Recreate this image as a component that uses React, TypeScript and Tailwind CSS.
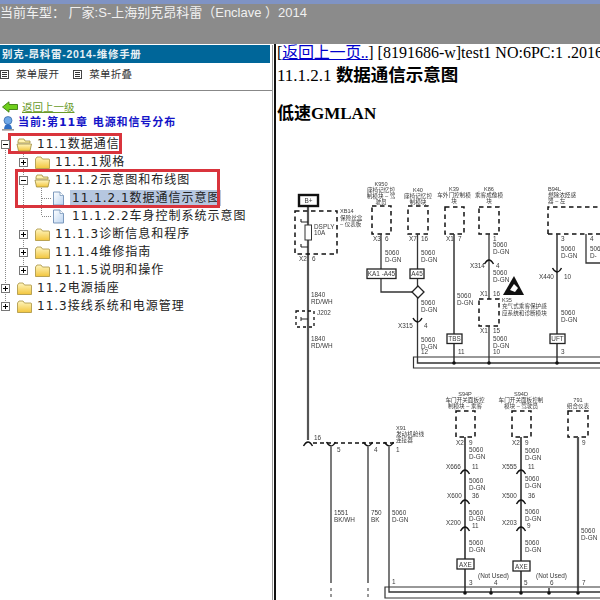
import React from "react";

const cjk = '"DejaVu Sans","Noto Sans CJK SC",sans-serif';

function Folder({ open }: { open?: boolean }) {
  return (
    <svg width="17" height="15" viewBox="0 0 17 15" className="relative z-10 shrink-0">
      <defs>
        <linearGradient id="fg" x1="0" y1="0" x2="0" y2="1">
          <stop offset="0" stopColor="#fff6c0" />
          <stop offset="1" stopColor="#f2c53c" />
        </linearGradient>
      </defs>
      {open ? (
        <>
          <path d="M2 4 L3 2 H8 L9 4 H14 V6 H2 Z" fill="#fff3b0" stroke="#9c8a3a" strokeWidth="0.8" />
          <path d="M1 7 H15.5 L14 14 H2.5 Z" fill="url(#fg)" stroke="#9c8a3a" strokeWidth="0.8" />
        </>
      ) : (
        <path d="M1.5 4 L3 2 H7 L8.5 4 H15 Q15.5 4 15.5 5 V13.5 H1.5 Z" fill="url(#fg)" stroke="#a8923f" strokeWidth="0.8" />
      )}
    </svg>
  );
}

function FileIcon() {
  return (
    <svg width="13" height="15" viewBox="0 0 13 15" className="shrink-0">
      <defs>
        <linearGradient id="pg" x1="0" y1="0" x2="1" y2="1">
          <stop offset="0" stopColor="#ffffff" />
          <stop offset="1" stopColor="#bcd4f0" />
        </linearGradient>
      </defs>
      <path d="M1.5 1 H8 L11.5 4.5 V14 H1.5 Z" fill="url(#pg)" stroke="#6f8fb5" strokeWidth="0.9" />
      <path d="M8 1 V4.5 H11.5" fill="#fff" stroke="#6f8fb5" strokeWidth="0.7" />
    </svg>
  );
}

function Toggle({ open }: { open?: boolean }) {
  return (
    <span className="relative z-10 flex h-[9px] w-[9px] items-center justify-center border border-[#777] bg-white">
      <span className="absolute h-px w-[5px] bg-black" />
      {!open && <span className="absolute h-[5px] w-px bg-black" />}
    </span>
  );
}

function Row({
  indent,
  open,
  label,
}: {
  indent?: boolean;
  open?: boolean;
  label: string;
}) {
  return (
    <div className={`flex h-[18px] items-center whitespace-nowrap ${indent ? "pl-[18px]" : ""}`}>
      <span className="flex h-[18px] w-[16px] shrink-0 items-center pl-[1px]">
        <Toggle open={open} />
      </span>
      <Folder open={open} />
      <span className="ml-[4px] text-[12px] leading-[18px] tracking-[1px] text-[#222]" style={{ fontFamily: cjk }}>
        {label}
      </span>
    </div>
  );
}

function FileRow({ label, selected }: { label: string; selected?: boolean }) {
  return (
    <div className="flex h-[18px] items-center whitespace-nowrap pl-[42px]">
      <span className="mr-[1px] h-0 w-[9px] border-t border-dotted border-[#888]" />
      <FileIcon />
      <span
        className={`ml-[5px] pl-[2px] text-[12px] leading-[16px] tracking-[1px] text-[#222] ${selected ? "bg-[#b6c7e0]" : ""}`}
        style={{ fontFamily: cjk }}
      >
        {label}
      </span>
    </div>
  );
}

function MenuGlyph() {
  return (
    <span className="flex h-[9px] w-[9px] flex-col justify-center gap-[1px] border border-[#444] px-[1px]">
      <span className="h-px bg-[#333]" />
      <span className="h-px bg-[#333]" />
      <span className="h-px bg-[#333]" />
    </span>
  );
}

const fontSvg = "Liberation Sans, Noto Sans CJK SC, sans-serif";

function T({ x, y, s, c, z }: { x: number; y: number; s: string; c?: boolean; z?: boolean }) {
  return (
    <text x={x} y={y} fontSize={z ? 5.6 : 6.4} fill="#3a3a3a" fontFamily={fontSvg} textAnchor={c ? "middle" : "start"}>
      {s}
    </text>
  );
}

function Two({ x, y, a = "5060", b = "D-GN", gap = 6.5 }: { x: number; y: number; a?: string; b?: string; gap?: number }) {
  return (
    <>
      <T x={x} y={y} s={a} />
      <T x={x} y={y + gap} s={b} />
    </>
  );
}

function Dash({ x, y, w, h }: { x: number; y: number; w: number; h: number }) {
  return <rect x={x} y={y} width={w} height={h} fill="none" stroke="#111" strokeWidth="1.5" strokeDasharray="4.5 3.5" />;
}

function Arc({ x, y }: { x: number; y: number }) {
  return <path d={`M${x - 4.5} ${y + 3} Q${x} ${y - 5} ${x + 4.5} ${y + 3}`} fill="none" stroke="#111" strokeWidth="1.4" />;
}

function Cup({ x, y }: { x: number; y: number }) {
  return <path d={`M${x - 4.5} ${y - 2} Q${x} ${y + 6} ${x + 4.5} ${y - 2}`} fill="none" stroke="#111" strokeWidth="1.4" />;
}

function Tag({ x, y, w, h, s }: { x: number; y: number; w: number; h: number; s: string }) {
  return (
    <>
      <rect x={x} y={y} width={w} height={h} fill="#fff" stroke="#222" strokeWidth="1.3" />
      <T x={x + w / 2} y={y + h - 2.4} s={s} c />
    </>
  );
}

function V({ x, a, b, w = 1.3, c = "#333" }: { x: number; a: number; b: number; w?: number; c?: string }) {
  return <line x1={x} y1={a} x2={x} y2={b} stroke={c} strokeWidth={w} />;
}

function Diagram() {
  return (
    <svg viewBox="276 180 324 420" width="324" height="420" className="blur-[0.35px]">
      {/* main supply */}
      <V x={308} a={206} b={440} w={2.2} c="#555" />
      <Dash x={295} y={211} w={42} h={43} />
      <rect x={299} y={195} width={19} height={11} fill="#fff" stroke="#111" strokeWidth="2.4" />
      <T x={308.5} y={203} s="B+" c />
      <rect x={305} y={225} width={6.5} height={15} fill="#fff" stroke="#333" />
      <path d="M301 222 H308 M301 219 V222 M301 247 H308 M301 244 V247" stroke="#222" strokeWidth="1.1" />
      <T x={314} y={229} s="DSPLY" />
      <T x={314} y={235} s="10A" />
      <T x={340} y={213} s="XB14" z />
      <T x={340} y={220} s="保险丝盒" z />
      <T x={340} y={226} s="– 仪表板" z />
      <T x={299} y={261} s="X2" />
      <T x={312} y={261} s="6" />
      <Two x={311} y={297} a="1840" b="RD/WH" />
      <rect x={296} y={311} width={18} height={16} fill="none" stroke="#111" strokeWidth="1.3" strokeDasharray="3 3" />
      <path d="M301 319 H308 M301 317 V321" stroke="#222" />
      <T x={317} y={315} s="J202" />
      <Two x={311} y={341} a="1840" b="RD/WH" />

      {/* K950 */}
      <T x={381} y={186} s="K950" c z />
      <T x={381} y={192} s="座椅记忆控" c z />
      <T x={381} y={198} s="制模块 – 驾" c z />
      <T x={381} y={204} s="驶员" c z />
      <Dash x={372} y={206} w={19} h={28} />
      <T x={373} y={241} s="X3" />
      <T x={385} y={241} s="6" />
      <path d="M381 234 V292 H412" fill="none" stroke="#333" strokeWidth="1.3" />
      <Two x={385} y={255} />
      <Tag x={367} y={269} w={29} h={9.5} s="KA1 -A45" />

      {/* K40 */}
      <T x={418} y={192} s="K40" c z />
      <T x={418} y={198} s="座椅记忆控" c z />
      <T x={418} y={204} s="制模块" c z />
      <Dash x={408} y={206} w={20} h={28} />
      <T x={409} y={241} s="X7" />
      <T x={421} y={241} s="16" />
      <V x={417.5} a={234} b={360} />
      <Two x={421} y={255} />
      <Tag x={410} y={269} w={14} h={9.5} s="A45" />
      <path d="M418 286 L424 292 L418 298 L412 292 Z" fill="#fff" stroke="#222" strokeWidth="1.3" />
      <Two x={421} y={305} />
      <Cup x={417.5} y={320} />
      <T x={398} y={328} s="X315" />
      <T x={424} y={328} s="4" />
      <Two x={421} y={342} />
      <T x={421} y={354} s="12" />

      {/* K39 */}
      <T x={454} y={191} s="K39" c z />
      <T x={454} y={197} s="车外门控制模" c z />
      <T x={454} y={203} s="块" c z />
      <Dash x={445} y={207} w={19} h={27} />
      <T x={446} y={241} s="X1" />
      <T x={458} y={241} s="7" />
      <V x={454} a={234} b={363} w={1.5} />
      <Two x={457} y={298} />
      <Tag x={447} y={334} w={15} h={9.5} s="TBS" />
      <T x={458} y={354} s="11" />

      {/* K86 */}
      <T x={489} y={191} s="K86" c z />
      <T x={489} y={197} s="乘客成像模" c z />
      <T x={489} y={203} s="块" c z />
      <Dash x={479} y={207} w={20} h={27} />
      <T x={493} y={241} s="1" />
      <V x={489} a={234} b={299} />
      <Two x={493} y={247} />
      <Arc x={489} y={261} />
      <T x={470} y={268} s="X314" />
      <T x={496} y={268} s="4" />
      <Two x={493} y={275} />
      <path d="M514 276 L524 295 H503 Z" fill="#111" />
      <path d="M510 290 L514 284 L518 288 L515 292 Z" fill="#fff" />
      <T x={480} y={296} s="X1" />
      <T x={493} y={296} s="16" />
      <Dash x={479} y={299} w={20} h={27} />
      <T x={502} y={302} s="K35" z />
      <T x={502} y={308} s="充气式乘客保护感" z />
      <T x={502} y={315} s="应系统和诊断模块" z />
      <T x={480} y={333} s="X1" />
      <T x={493} y={333} s="15" />
      <V x={489} a={326} b={363} />
      <Two x={493} y={341} />
      <T x={493} y={354} s="10" />

      {/* B94L */}
      <T x={548} y={191} s="B94L" z />
      <T x={548} y={197} s="燃除浓烃感" z />
      <T x={548} y={203} s="器 – 左" z />
      <path d="M548 234 V207 H608 M548 234 H608" fill="none" stroke="#111" strokeWidth="1.5" strokeDasharray="4.5 3.5" />
      <T x={561} y={241} s="3" />
      <T x={590} y={241} s="4" />
      <V x={557} a={234} b={363} w={1.5} />
      <Two x={561} y={251} />
      <path d="M586 234 V263 H606" fill="none" stroke="#333" strokeWidth="1.3" />
      <text x={590} y={251} fontSize={6.4} fill="#3a3a3a" fontFamily={fontSvg}>506</text>
      <text x={590} y={257.5} fontSize={6.4} fill="#3a3a3a" fontFamily={fontSvg}>D-</text>
      <Cup x={557} y={270} />
      <T x={539} y={279} s="X440" />
      <T x={564} y={279} s="10" />
      <Two x={561} y={315} />
      <Tag x={550} y={334} w={15} h={9.5} s="UFT" />
      <T x={561} y={354} s="3" />

      {/* upper bus */}
      <path d="M606 357 H413.5 V368 H606" fill="none" stroke="#333" strokeWidth="1.2" />
      <path d="M417.5 360 V363 H606" fill="none" stroke="#333" strokeWidth="1.4" />
      <circle cx={454} cy={363} r={1.8} fill="#111" />
      <circle cx={489} cy={363} r={1.8} fill="#111" />
      <circle cx={557} cy={363} r={1.8} fill="#111" />

      {/* connector X91 */}
      <Arc x={308} y={443} />
      <line x1={313} y1={443} x2={394} y2={443} stroke="#111" strokeWidth="1.4" strokeDasharray="4 3" />
      <Cup x={331} y={444} />
      <Cup x={368} y={444} />
      <Cup x={389} y={444} />
      <T x={314} y={440} s="16" />
      <T x={337} y={452} s="5" />
      <T x={374} y={452} s="4" />
      <T x={396} y={452} s="1" />
      <T x={396} y={430} s="X91" z />
      <T x={396} y={436} s="发动机舱线" z />
      <T x={396} y={442} s="连接器" z />
      <V x={331} a={447} b={583} />
      <V x={368} a={447} b={583} />
      <path d="M389 447 V592 H606" fill="none" stroke="#333" strokeWidth="1.3" />
      <Two x={334} y={515} a="1551" b="BK/WH" />
      <Two x={371} y={515} a="750" b="BK" />
      <Two x={392} y={515} />
      <T x={392} y={584} s="1" />
      <path d="M331 588 V598 M368 588 V598" stroke="#333" strokeDasharray="3 3" />

      {/* S94P */}
      <T x={465} y={396} s="S94P" c z />
      <T x={465} y={402} s="车门开关面板控" c z />
      <T x={465} y={408} s="制模块 – 乘客" c z />
      <Dash x={456} y={411} w={19} h={26} />
      <T x={456} y={445} s="X2" />
      <T x={469} y={445} s="9" />
      <V x={465} a={437} b={593} w={1.5} c="#222" />
      <Two x={469} y={452} />
      <Arc x={465} y={471} />
      <T x={446} y={469} s="X666" />
      <T x={472} y={469} s="11" />
      <Two x={469} y={483} />
      <Arc x={465} y={501} />
      <T x={447} y={498} s="X600" />
      <T x={472} y={498} s="36" />
      <Two x={469} y={514.5} />
      <Arc x={465} y={528} />
      <T x={446} y={525} s="X200" />
      <T x={472} y={528} s="11" />
      <Two x={469} y={545} />
      <Tag x={457} y={559} w={17} h={10} s="AXE" />
      <T x={469} y={585} s="3" />
      <T x={478} y={578} s="(Not Used)" />
      <T x={494} y={585} s="4" />

      {/* S94D */}
      <T x={521} y={396} s="S94D" c z />
      <T x={521} y={402} s="车门开关面板控制" c z />
      <T x={521} y={408} s="模块 – 驾驶员" c z />
      <Dash x={512} y={411} w={19} h={26} />
      <T x={512} y={445} s="X2" />
      <T x={525} y={445} s="9" />
      <V x={521} a={437} b={593} w={1.5} c="#222" />
      <Two x={525} y={453} />
      <Arc x={521} y={471} />
      <T x={502} y={469} s="X555" />
      <T x={528} y={469} s="11" />
      <Two x={525} y={481} />
      <Arc x={521} y={501} />
      <T x={502} y={498} s="X500" />
      <T x={528} y={498} s="36" />
      <Two x={525} y={514} />
      <Arc x={521} y={528} />
      <T x={502} y={525} s="X203" />
      <T x={527} y={528} s="9" />
      <Two x={525} y={545} />
      <Tag x={513} y={561} w={17} h={10} s="AXE" />
      <T x={524} y={585} s="5" />
      <T x={536} y={578} s="(Not Used)" />
      <T x={550} y={585} s="6" />

      {/* 791 */}
      <T x={578} y={402} s="791" c z />
      <T x={578} y={408} s="组合仪表" c z />
      <Dash x={568} y={411} w={20} h={26} />
      <T x={582} y={445} s="9" />
      <V x={578} a={437} b={593} w={2.2} c="#555" />
      <Two x={581} y={533} />
      <T x={582} y={585} s="7" />

      {/* lower bus */}
      <path d="M606 587 H385 V598 H606" fill="none" stroke="#333" strokeWidth="1.2" />
      <line x1={491} y1={588} x2={491} y2={593} stroke="#222" strokeWidth="1.3" />
      <line x1={549} y1={588} x2={549} y2={593} stroke="#222" strokeWidth="1.3" />
      {[465, 491, 521, 549, 578].map((x) => (
        <circle key={x} cx={x} cy={593} r={1.8} fill="#111" />
      ))}
    </svg>
  );
}

export default function App() {
  return (
    <div className="flex h-[600px] w-[600px] flex-col overflow-hidden bg-white">
      <header className="h-[44px] shrink-0 bg-[#8b8b8b]">
        <div className="h-[4px] bg-[#7f93c4]" />
        <div
          className="whitespace-nowrap pt-[1px] text-[13px] leading-[16px] text-[#f0f0f0]"
          style={{ fontFamily: '"Liberation Sans","Noto Sans CJK SC",sans-serif' }}
        >
          当前车型： 厂家:S-上海别克昂科雷（Enclave ）2014
        </div>
      </header>
      <div className="flex min-h-0 flex-1">
        <aside className="w-[276px] shrink-0 border-r-[2px] border-[#111] pr-[1px]">
          <div className="h-full border-r border-[#999]">
            <div
              className="mt-[1px] mr-[2px] h-[18px] bg-[#006699] pl-[2px] text-[10.5px] font-bold leading-[18px] tracking-[0.7px] text-[#e8f0f4]"
              style={{ fontFamily: '"Liberation Sans","Noto Sans CJK SC",sans-serif' }}
            >
              别克-昂科雷-2014-维修手册
            </div>
            <div
              className="flex h-[28px] items-center border-b border-[#888] pb-[5px] text-[10.5px] tracking-[0.3px] text-[#333]"
              style={{ fontFamily: '"Noto Sans CJK SC",sans-serif' }}
            >
              <MenuGlyph />
              <span className="ml-[7px]">菜单展开</span>
              <span className="ml-[14px]">
                <MenuGlyph />
              </span>
              <span className="ml-[7px]">菜单折叠</span>
            </div>
            <div className="flex h-[22px] items-end pl-[2px]">
              <svg width="16" height="12" viewBox="0 0 16 12">
                <path d="M0.5 6 L7 0.8 V3.5 H15.5 V8.5 H7 V11.2 Z" fill="#6fcf1c" stroke="#3c7a10" strokeWidth="0.9" />
              </svg>
              <span
                className="ml-[4px] text-[10.5px] leading-[12px] text-[#6a9a2a] underline"
                style={{ fontFamily: '"Noto Sans CJK SC",sans-serif' }}
              >
                返回上一级
              </span>
            </div>
            <div className="flex h-[20px] items-center pl-[2px]">
              <svg width="12" height="15" viewBox="0 0 12 15" className="shrink-0">
                <circle cx="6" cy="4.5" r="4" fill="#6fa8e8" stroke="#31609f" strokeWidth="0.7" />
                <path d="M2 14 Q2 8 6 8 Q10 8 10 14 Z" fill="#2f6fc4" />
                <rect x="0" y="13" width="12" height="1.6" fill="#999" />
              </svg>
              <span
                className="ml-[4px] whitespace-nowrap text-[11px] font-bold tracking-[0.9px] text-[#1414c8]"
                style={{ fontFamily: cjk }}
              >
                当前:第11章 电源和信号分布
              </span>
            </div>
            <div className="relative mt-[1px] pt-[1px]">
              <span className="absolute left-[5px] top-[9px] h-[162px] border-l border-dotted border-[#888]" />
              <span className="absolute left-[23px] top-[18px] h-[117px] border-l border-dotted border-[#888]" />
              <span className="absolute left-[41px] top-[54px] h-[27px] border-l border-dotted border-[#888]" />
              <Row open label="11.1数据通信" />
              <Row indent label="11.1.1规格" />
              <Row indent open label="11.1.2示意图和布线图" />
              <FileRow selected label="11.1.2.1数据通信示意图" />
              <FileRow label="11.1.2.2车身控制系统示意图" />
              <Row indent label="11.1.3诊断信息和程序" />
              <Row indent label="11.1.4维修指南" />
              <Row indent label="11.1.5说明和操作" />
              <Row label="11.2电源插座" />
              <Row label="11.3接线系统和电源管理" />
              <span className="absolute left-[8px] top-[-1px] h-[21px] w-[114px] border-[3px] border-[#d9343c]" />
              <span className="absolute left-[15px] top-[35px] h-[39px] w-[205px] border-[3px] border-[#d9343c]" />
            </div>
          </div>
        </aside>
        <main className="min-w-0 flex-1 overflow-hidden pl-[1px] text-black" style={{ fontFamily: '"Liberation Serif","Noto Sans CJK SC",serif' }}>
          <div className="whitespace-nowrap text-[16px] leading-[18px]">
            [<span className="tracking-[-0.3px] text-[#0000cc] underline">返回上一页..</span>] [8191686-w]test1 NO:6PC:1 .2016
          </div>
          <div className="mt-[2px] whitespace-nowrap text-[17px] leading-[23px]">
            11.1.2.1 <span className="text-[17.5px] font-bold">数据通信示意图</span>
          </div>
          <div className="mt-[15px] whitespace-nowrap text-[17px] font-bold leading-[24px]">低速GMLAN</div>
          <div className="mt-[54px] -ml-[1px]">
            <Diagram />
          </div>
        </main>
      </div>
    </div>
  );
}
